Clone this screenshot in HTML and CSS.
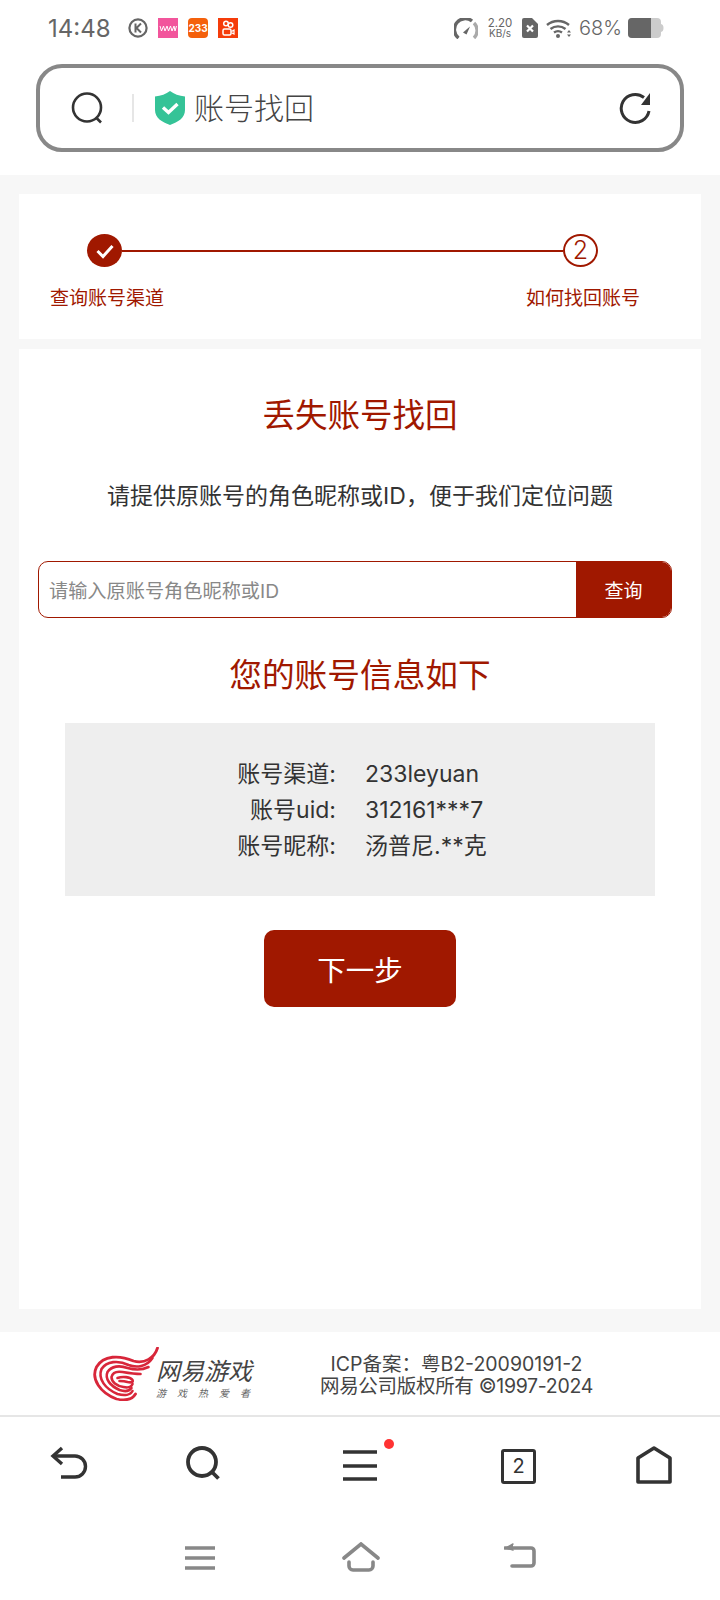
FILE: index.html
```html
<!DOCTYPE html>
<html lang="zh-CN">
<head>
<meta charset="utf-8">
<title>账号找回</title>
<link rel="stylesheet" href="styles.css">
</head>
<body>
<div class="page">
  <header class="top">
    <div class="status">
      <span class="time">14:48</span>
      <div class="notif">
        <svg width="20" height="20" viewBox="0 0 20 20"><circle cx="10" cy="10" r="8.600" fill="none" stroke="#666" stroke-width="2.200"/><path d="M7.500 5.500v9M13 5.500 8.500 10l4.500 4.500" fill="none" stroke="#666" stroke-width="2"/></svg>
        <svg width="20" height="20" viewBox="0 0 20 20"><rect width="20" height="20" fill="#f2559c"/><path d="M2 8l1.500 5L5.500 8l1.500 5L9 8l1.500 5L12.500 8l1.500 5L16 8l1 5L18.500 8" fill="none" stroke="#fff" stroke-width="1"/></svg>
        <span class="app233">233</span>
        <svg width="20" height="20" viewBox="0 0 20 20"><rect width="20" height="20" fill="#f53c0a"/><circle cx="8" cy="5.500" r="2.300" fill="none" stroke="#fff" stroke-width="1.500"/><circle cx="12.500" cy="7" r="2.300" fill="none" stroke="#fff" stroke-width="1.500"/><rect x="5" y="11" width="8" height="6" rx="1.500" fill="none" stroke="#fff" stroke-width="1.500"/><path d="M13.500 13.500l2.500-1.500v4l-2.500-1.200" fill="none" stroke="#fff" stroke-width="1.200"/></svg>
      </div>
      <div class="sys">
        <svg class="speed" width="24" height="21" viewBox="0 0 24 21"><path d="M4.500 20A10.500 10.500 0 0 1 18 3" fill="none" stroke="#666" stroke-width="3.400"/><path d="M20 5A10.500 10.500 0 0 1 20 20" fill="none" stroke="#aaa" stroke-width="3.400"/><path d="M9 14.500l7-6-3.500 8z" fill="#666"/></svg>
        <div class="rate"><span>2.20</span><span>KB/s</span></div>
        <svg class="sim" width="16" height="20" viewBox="0 0 16 20"><path d="M2 0h8l6 6v12a2 2 0 0 1-2 2H2a2 2 0 0 1-2-2V2a2 2 0 0 1 2-2z" fill="#666"/><path d="M5 7.500l6 6M11 7.500l-6 6" stroke="#fff" stroke-width="2.200"/></svg>
        <svg class="wifi" width="26" height="20" viewBox="0 0 26 20"><path d="M1 7a17 17 0 0 1 22 0M4.500 11a12 12 0 0 1 15 0M8 14.500a7 7 0 0 1 8 0" fill="none" stroke="#666" stroke-width="2.400"/><circle cx="12" cy="18" r="2" fill="#666"/><path d="M23 12l-2 2.500h4zM23 19l-2-2.500h4z" fill="#666"/></svg>
        <span class="pct">68%</span>
        <svg class="batt" width="36" height="20" viewBox="0 0 36 20"><rect width="33" height="20" rx="4" fill="#ccc"/><path d="M4 0h19v20H4a4 4 0 0 1-4-4V4a4 4 0 0 1 4-4z" fill="#666"/><path d="M33 6a3 4 0 0 1 2.500 4 3 4 0 0 1-2.500 4z" fill="#ccc"/></svg>
      </div>
    </div>
    <div class="address">
      <svg class="a-search" width="33" height="33" viewBox="0 0 33 33"><circle cx="16" cy="15.500" r="14" fill="none" stroke="#333" stroke-width="2.600"/><path d="M25.500 26l4.500 4.500" stroke="#333" stroke-width="2.600"/></svg>
      <span class="a-div"></span>
      <svg class="a-shield" width="32" height="34" viewBox="0 0 32 34"><path d="M16 0c4 3 9 5 15 5.500V19c0 8-7 12-15 15C8 31 1 27 1 19V5.500C7 5 12 3 16 0z" fill="#35c397"/><path d="M9 16.500l5.500 5L23.500 13" fill="none" stroke="#fff" stroke-width="3.400"/></svg>
      <span class="a-title">账号找回</span>
      <svg class="a-reload" width="33" height="33" viewBox="0 0 33 33"><path d="M30 19A14 14 0 1 1 25 5.500" fill="none" stroke="#333" stroke-width="3"/><path d="M31 1v12h-9z" fill="#333"/></svg>
    </div>
  </header>

  <main class="main">
    <section class="card steps">
      <div class="track">
        <span class="dot done"><svg width="20" height="18" viewBox="0 0 20 18"><path d="M2.500 9l5.500 5.500L17.500 4" fill="none" stroke="#fff" stroke-width="3"/></svg></span>
        <span class="line"></span>
        <span class="dot next">2</span>
      </div>
      <div class="labels"><span>查询账号渠道</span><span>如何找回账号</span></div>
    </section>

    <section class="card body">
      <h1 class="title">丢失账号找回</h1>
      <p class="hint">请提供原账号的角色昵称或ID，便于我们定位问题</p>
      <div class="query">
        <span class="placeholder">请输入原账号角色昵称或ID</span>
        <span class="q-btn">查询</span>
      </div>
      <h2 class="title second">您的账号信息如下</h2>
      <dl class="info">
        <dt>账号渠道:</dt><dd>233leyuan</dd>
        <dt>账号uid:</dt><dd>312161***7</dd>
        <dt>账号昵称:</dt><dd>汤普尼.**克</dd>
      </dl>
      <div class="next-btn">下一步</div>
    </section>
  </main>

  <footer class="foot">
    <div class="logo">
      <svg class="swirl" width="67" height="54" viewBox="0 0 66 54" fill="none" stroke="#d8263a" stroke-linecap="round">
        <path d="M65 1C62 11 52 17 41 14 27 8 11 8 4 20-2 32 8 46 24 52c9 2 16 0 19-5" stroke-width="2.800"/>
        <path d="M60 11C54 20 44 21 36 18 26 13 14 14 9 22c-4 10 4 20 16 25 7 2 13 1 15-3" stroke-width="2.600"/>
        <path d="M56 20c-6 3-14 3-21 1-8-3-16-2-20 4-3 7 3 14 12 18 6 2 10 1 12-2" stroke-width="2.600"/>
        <path d="M48 27c-6 0-12-1-18-2-6-1-10 1-11 5 0 5 5 9 12 10 4 1 8 0 9-3" stroke-width="2.600"/>
        <path d="M25 31c5-2 13-1 15 2 1 2-1 3-5 2-3-1-6-1-8-1" stroke-width="2.600"/>
      </svg>
      <div class="logo-text"><span class="lt-main">网易游戏</span><span class="lt-sub">游戏热爱者</span></div>
    </div>
    <div class="legal"><span>ICP备案：粤B2-20090191-2</span><span class="legal-2">网易公司版权所有 ©1997-2024</span></div>
  </footer>

  <nav class="tools">
    <svg width="38" height="34" viewBox="0 0 38 34" fill="none" stroke="#333" stroke-width="3.400"><path d="M12 2 3 10l9 8"/><path d="M3 10h22a10 10 0 0 1 0 21H11"/></svg>
    <svg width="36" height="36" viewBox="0 0 36 36" fill="none" stroke="#333" stroke-width="3.800"><circle cx="16" cy="16" r="14"/><path d="M26 26l6.500 6.500"/></svg>
    <div class="menu"><svg width="34" height="32" viewBox="0 0 34 32" fill="none" stroke="#333" stroke-width="3.400"><path d="M0 2h34M0 16h34M0 29h34"/></svg><i class="badge"></i></div>
    <div class="tabs">2</div>
    <svg width="36" height="38" viewBox="0 0 36 38" fill="none" stroke="#333" stroke-width="3.600" stroke-linejoin="round"><path d="M2 12 18 2l16 10v24H2z"/></svg>
  </nav>

  <nav class="sysnav">
    <svg width="30" height="26" viewBox="0 0 30 26" fill="none" stroke="#888" stroke-width="3.600"><path d="M0 3h30M0 13h30M0 23h30"/></svg>
    <svg class="sys-home" width="38" height="30" viewBox="0 0 38 30" fill="none" stroke="#888" stroke-width="3.600" stroke-linecap="round"><path d="M2 16 19 2l17 14"/><path d="M7 20v4a4 4 0 0 0 4 4h16a4 4 0 0 0 4-4v-4"/></svg>
    <svg class="sys-back" width="32" height="26" viewBox="0 0 32 26" fill="none" stroke="#888" stroke-width="3.600" stroke-linecap="round"><path d="M1 5h26a3 3 0 0 1 3 3v12a3 3 0 0 1-3 3H8"/><path d="M9 1 2 5l7 2" fill="#888" stroke-width="1.500"/></svg>
  </nav>
</div>
</body>
</html>
```
FILE: styles.css
```css
* { box-sizing: border-box; }
html, body { margin: 0; padding: 0; }
body { font-family: Inter, "Noto Sans CJK SC", sans-serif; background: #fff; }
.page { width: 720px; height: 1600px; display: flex; flex-direction: column; overflow: hidden; background: #fff; }

.top { height: 175px; flex: none; background: #fff; }
.status { height: 60px; display: flex; align-items: center; padding: 0 56px 4px 48px; color: #666; }
.time { font-size: 24px; width: 80px; }
.notif { display: flex; gap: 10px; align-items: center; }
.app233 { width: 20px; height: 20px; border-radius: 4px; background: #f4610c; color: #fff; font-size: 10px; font-weight: 700; line-height: 20px; text-align: center; }
.sys { margin-left: auto; display: flex; align-items: center; }
.rate { display: flex; flex-direction: column; align-items: center; font-size: 10px; line-height: 10px; width: 26px; margin: 0 8px 0 9px; }
.rate span:first-child { font-size: 11.500px; }
.sim { margin-left: 1px; }
.wifi { margin-left: 8px; }
.pct { font-size: 20px; margin: 0 6px 0 7px; font-weight: 300; }

.address { height: 88px; margin: 4px 36px 0; border: 4px solid #888; border-radius: 26px; display: flex; align-items: center; padding-left: 31px; padding-right: 28px; }
.a-div { width: 2px; height: 28px; background: #e6e6e6; margin: 0 20px 0 28px; }
.a-title { font-size: 30px; line-height: 36px; color: #444; margin: 0 0 0 8px; font-weight: 300; }
.a-reload { margin-left: auto; }

.main { flex: 1; background: #f7f7f7; padding: 19px 19px 23px; display: flex; flex-direction: column; gap: 10px; }
.card { background: #fff; }
.steps { height: 145px; flex: none; padding-top: 40px; }
.track { display: flex; align-items: center; padding: 0 103px 0 68px; }
.dot { width: 35px; height: 33px; border-radius: 50%; flex: none; display: flex; align-items: center; justify-content: center; }
.done { background: #a01800; }
.next { border: 2px solid #a01800; color: #a01800; font-size: 25px; font-weight: 300; line-height: 1; }
.line { flex: 1; height: 2px; background: #a01800; }
.labels { display: flex; justify-content: space-between; padding: 0 61px 0 31px; margin-top: 18px; color: #a01800; font-size: 19px; line-height: 27px; }

.body { flex: 1; padding-top: 45px; }
.title { margin: 0; text-align: center; font-size: 32.500px; line-height: 44px; font-weight: 400; color: #a01800; }
.hint { margin: 40px 0 0; text-align: center; font-size: 23px; line-height: 36px; color: #333; font-weight: 400; }
.query { margin: 47px 29px 0 19px; height: 57px; border: 1px solid #a01800; border-radius: 10px; display: flex; align-items: center; overflow: hidden; }
.placeholder { flex: 1; padding-left: 10px; font-size: 19.200px; color: #888; }
.q-btn { width: 95px; height: 100%; background: #a01800; color: #fff; font-size: 19px; display: flex; align-items: center; justify-content: center; }
.title.second { margin-top: 35px; font-size: 32.700px; }
.info { margin: 26px 46px 0 46px; padding: 33px 0 0; height: 173px; background: #eee; display: grid; grid-template-columns: 271px 1fr; column-gap: 29px; align-content: start; font-size: 23px; line-height: 36px; color: #333; }
.info dt { text-align: right; }
.info dd { margin: 0; }
.next-btn { width: 192px; height: 77px; margin: 34px auto 0; border-radius: 10px; background: #a01800; color: #fff; font-size: 28.500px; display: flex; align-items: center; justify-content: center; }

.foot { height: 85px; flex: none; border-bottom: 2px solid #e6e6e6; display: flex; align-items: center; background: #fff; padding-left: 92px; }
.logo { display: flex; width: 228px; align-items: center; }
.logo-text { display: flex; flex-direction: column; margin-left: -3px; padding-top: 10px; color: #444; }
.lt-main { font-size: 24px; line-height: 28px; font-style: italic; width: 100px; white-space: nowrap; }
.lt-sub { font-size: 10px; line-height: 14px; letter-spacing: 11px; font-style: italic; color: #666; white-space: nowrap; }
.legal { display: flex; flex-direction: column; align-items: center; font-size: 19.500px; line-height: 22px; color: #444; white-space: nowrap; width: 273px; padding-top: 3px; }
.legal-2 { letter-spacing: -0.300px; }

.tools { height: 117px; flex: none; position: relative; display: grid; grid-template-columns: 136px 157px 158px 135px 1fr; align-items: start; padding: 29px 0 0 50px; }
.menu { position: relative; width: 34px; padding-top: 4px; }
.badge { position: absolute; top: -7px; right: -17px; width: 10px; height: 10px; border-radius: 50%; background: #f33; }
.tabs { width: 35px; height: 35px; margin-top: 3px; border: 3.500px solid #333; border-radius: 3px; font-size: 20px; line-height: 28px; text-align: center; color: #333; }
.sysnav { flex: none; height: 66px; display: grid; grid-template-columns: 157px 162px 1fr; align-items: start; padding: 11px 0 0 185px; }
.sys-home { margin-top: -3px; }
.sys-back { margin-top: -2px; }
```
